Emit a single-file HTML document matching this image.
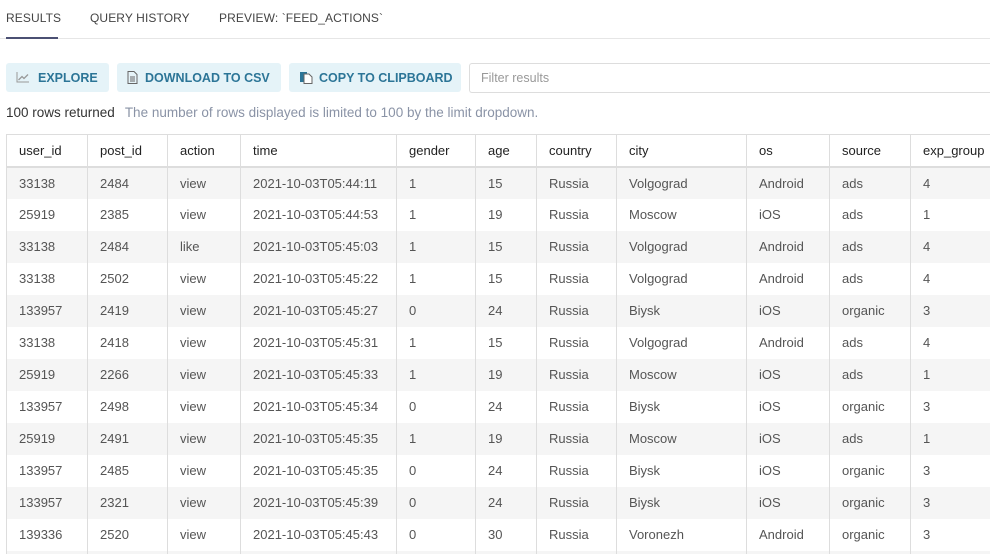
<!DOCTYPE html>
<html><head><meta charset="utf-8"><style>
*{margin:0;padding:0;box-sizing:border-box}
html,body{width:990px;height:554px;overflow:hidden}
body{background:#fff;font-family:"Liberation Sans",Arial,sans-serif;position:relative;color:#333}
.tabs{position:absolute;left:0;top:0;width:990px;height:39px;border-bottom:1px solid #e6e6e6}
.tab{position:absolute;top:11px;font-size:12px;color:#444;letter-spacing:0.1px}
.ul{position:absolute;left:6px;top:37px;width:52px;height:2px;background:#4b5073}
.btn{position:absolute;top:63px;height:29px;background:#e5f3f8;border-radius:3px;color:#2c7597;font-weight:bold;font-size:12.5px;line-height:30px;white-space:nowrap}
.btn svg{position:absolute;top:8px}
.filter{position:absolute;left:469px;top:63px;width:521px;height:30px;border:1px solid #ddd;border-right:none;border-radius:3px 0 0 3px;font-size:12.5px;color:#999;padding-left:11px;line-height:29px}
.info{position:absolute;left:6px;top:105px;font-size:13.5px;color:#333;white-space:nowrap}
.info span{color:#8a93a6;margin-left:10px}
.wrap{position:absolute;left:6px;top:134px;width:984px;height:420px;overflow:hidden}
table{width:994px;border-collapse:collapse;table-layout:fixed;font-size:13px}
th{height:32px;text-align:left;font-weight:normal;color:#222;padding-left:12px;border:1px solid #ddd;border-bottom:2px solid #ddd}
td{height:32px;padding-left:12px;color:#555;border-left:1px solid #ddd;border-right:1px solid #ddd;white-space:nowrap;overflow:hidden}
tr.g td{background:#f5f5f5}
</style></head><body>
<div class="tabs">
<div class="tab" style="left:6px">RESULTS</div>
<div class="tab" style="left:90px">QUERY HISTORY</div>
<div class="tab" style="left:219px">PREVIEW: `FEED_ACTIONS`</div>
<div class="ul"></div>
</div>
<div class="btn" style="left:6px;width:103px"><svg style="left:10px" width="14" height="12" viewBox="0 0 14 12"><path d="M1 1V11H13" stroke="#999" fill="none"/><path d="M2.5 9L6 5.5 8 7.5 12 3.5" stroke="#999" stroke-width="1.3" fill="none"/></svg><span style="position:absolute;left:32px">EXPLORE</span></div>
<div class="btn" style="left:117px;width:164px"><svg style="left:10px" width="11" height="13" viewBox="0 0 11 13"><path d="M1 .5H7L10 3.5V12.5H1Z" stroke="#666" fill="none"/><path d="M3 6H8M3 8H8M3 10H8" stroke="#666"/></svg><span style="position:absolute;left:28px">DOWNLOAD TO CSV</span></div>
<div class="btn" style="left:289px;width:172px"><svg style="left:11px" width="13" height="13" viewBox="0 0 13 13"><rect x="0" y="1" width="7" height="10" fill="#2c7597"/><path d="M4 3H9L12 6V12.5H4Z" stroke="#666" fill="#fff"/></svg><span style="position:absolute;left:30px">COPY TO CLIPBOARD</span></div>
<div class="filter">Filter results</div>
<div class="info">100 rows returned<span>The number of rows displayed is limited to 100 by the limit dropdown.</span></div>
<div class="wrap">
<table>
<colgroup><col style="width:81px"><col style="width:80px"><col style="width:73px"><col style="width:156px"><col style="width:79px"><col style="width:61px"><col style="width:80px"><col style="width:130px"><col style="width:83px"><col style="width:81px"><col style="width:90px"></colgroup>
<tr><th>user_id</th><th>post_id</th><th>action</th><th>time</th><th>gender</th><th>age</th><th>country</th><th>city</th><th>os</th><th>source</th><th>exp_group</th></tr>
<tr class="g"><td>33138</td><td>2484</td><td>view</td><td>2021-10-03T05:44:11</td><td>1</td><td>15</td><td>Russia</td><td>Volgograd</td><td>Android</td><td>ads</td><td>4</td></tr>
<tr><td>25919</td><td>2385</td><td>view</td><td>2021-10-03T05:44:53</td><td>1</td><td>19</td><td>Russia</td><td>Moscow</td><td>iOS</td><td>ads</td><td>1</td></tr>
<tr class="g"><td>33138</td><td>2484</td><td>like</td><td>2021-10-03T05:45:03</td><td>1</td><td>15</td><td>Russia</td><td>Volgograd</td><td>Android</td><td>ads</td><td>4</td></tr>
<tr><td>33138</td><td>2502</td><td>view</td><td>2021-10-03T05:45:22</td><td>1</td><td>15</td><td>Russia</td><td>Volgograd</td><td>Android</td><td>ads</td><td>4</td></tr>
<tr class="g"><td>133957</td><td>2419</td><td>view</td><td>2021-10-03T05:45:27</td><td>0</td><td>24</td><td>Russia</td><td>Biysk</td><td>iOS</td><td>organic</td><td>3</td></tr>
<tr><td>33138</td><td>2418</td><td>view</td><td>2021-10-03T05:45:31</td><td>1</td><td>15</td><td>Russia</td><td>Volgograd</td><td>Android</td><td>ads</td><td>4</td></tr>
<tr class="g"><td>25919</td><td>2266</td><td>view</td><td>2021-10-03T05:45:33</td><td>1</td><td>19</td><td>Russia</td><td>Moscow</td><td>iOS</td><td>ads</td><td>1</td></tr>
<tr><td>133957</td><td>2498</td><td>view</td><td>2021-10-03T05:45:34</td><td>0</td><td>24</td><td>Russia</td><td>Biysk</td><td>iOS</td><td>organic</td><td>3</td></tr>
<tr class="g"><td>25919</td><td>2491</td><td>view</td><td>2021-10-03T05:45:35</td><td>1</td><td>19</td><td>Russia</td><td>Moscow</td><td>iOS</td><td>ads</td><td>1</td></tr>
<tr><td>133957</td><td>2485</td><td>view</td><td>2021-10-03T05:45:35</td><td>0</td><td>24</td><td>Russia</td><td>Biysk</td><td>iOS</td><td>organic</td><td>3</td></tr>
<tr class="g"><td>133957</td><td>2321</td><td>view</td><td>2021-10-03T05:45:39</td><td>0</td><td>24</td><td>Russia</td><td>Biysk</td><td>iOS</td><td>organic</td><td>3</td></tr>
<tr><td>139336</td><td>2520</td><td>view</td><td>2021-10-03T05:45:43</td><td>0</td><td>30</td><td>Russia</td><td>Voronezh</td><td>Android</td><td>organic</td><td>3</td></tr>
<tr class="g"><td>&nbsp;</td><td></td><td></td><td></td><td></td><td></td><td></td><td></td><td></td><td></td><td></td></tr>
</table>
</div>
</body></html>
